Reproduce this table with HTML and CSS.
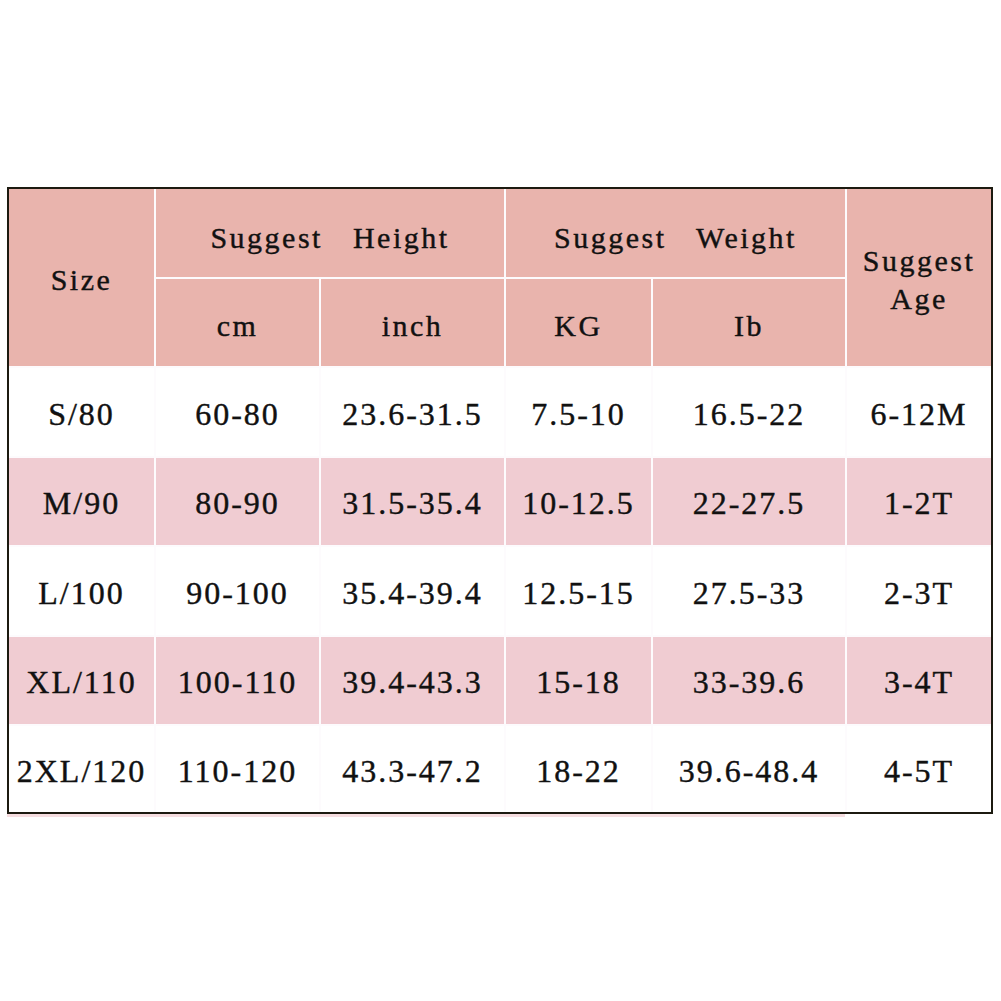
FILE: index.html
```html
<!DOCTYPE html>
<html>
<head>
<meta charset="utf-8">
<link rel="stylesheet" href="styles.css">
</head>
<body>
<div class="page">
  <div class="chart">
    <div class="cell head size-h">Size</div>
    <div class="cell head height-h">Suggest   Height</div>
    <div class="cell head weight-h">Suggest   Weight</div>
    <div class="cell head age-h">Suggest<br>Age</div>
    <div class="cell head sub">cm</div>
    <div class="cell head sub">inch</div>
    <div class="cell head sub">KG</div>
    <div class="cell head sub">Ib</div>

    <div class="cell">S/80</div><div class="cell">60-80</div><div class="cell">23.6-31.5</div><div class="cell">7.5-10</div><div class="cell">16.5-22</div><div class="cell">6-12M</div>
    <div class="cell alt">M/90</div><div class="cell alt">80-90</div><div class="cell alt">31.5-35.4</div><div class="cell alt">10-12.5</div><div class="cell alt">22-27.5</div><div class="cell alt">1-2T</div>
    <div class="cell">L/100</div><div class="cell">90-100</div><div class="cell">35.4-39.4</div><div class="cell">12.5-15</div><div class="cell">27.5-33</div><div class="cell">2-3T</div>
    <div class="cell alt">XL/110</div><div class="cell alt">100-110</div><div class="cell alt">39.4-43.3</div><div class="cell alt">15-18</div><div class="cell alt">33-39.6</div><div class="cell alt">3-4T</div>
    <div class="cell">2XL/120</div><div class="cell">110-120</div><div class="cell">43.3-47.2</div><div class="cell">18-22</div><div class="cell">39.6-48.4</div><div class="cell">4-5T</div>
  </div>
  <div class="under"></div>
</div>
</body>
</html>
```
FILE: styles.css
```css
html, body {
  margin: 0;
  padding: 0;
  background: #ffffff;
}

.page {
  padding: 187px 0 0 7px;
  width: 994px;
}

.chart {
  display: grid;
  width: 982px;
  grid-template-columns: 145px 163px 183px 145px 192px 144px;
  grid-template-rows: 88px 87px 88px 87px 88px 87px 86px;
  gap: 2px;
  background: #fdfbfd;
  border: 2px solid #1c1a10;
  font-family: "Liberation Serif", "Times New Roman", serif;
  color: #111111;
}

.cell {
  display: flex;
  align-items: center;
  justify-content: center;
  text-align: center;
  background: #ffffff;
  font-size: 32px;
  letter-spacing: 2px;
  padding-top: 4px;
  -webkit-text-stroke: 0.4px #111111;
}

.alt {
  background: #f0ccd2;
}

.head {
  background: #e9b4ad;
  font-size: 30px;
  letter-spacing: 2.5px;
  white-space: pre;
  line-height: 38px;
}

.size-h {
  grid-column: 1;
  grid-row: 1 / span 2;
}

.height-h {
  grid-column: 2 / span 2;
  grid-row: 1;
  padding-top: 10px;
}

.weight-h {
  grid-column: 4 / span 2;
  grid-row: 1;
  padding-top: 10px;
}

.age-h {
  grid-column: 6;
  grid-row: 1 / span 2;
  white-space: normal;
}

.sub {
  padding-top: 6px;
}

.under {
  width: 838px;
  height: 3px;
  background: #f6dde0;
}
```
